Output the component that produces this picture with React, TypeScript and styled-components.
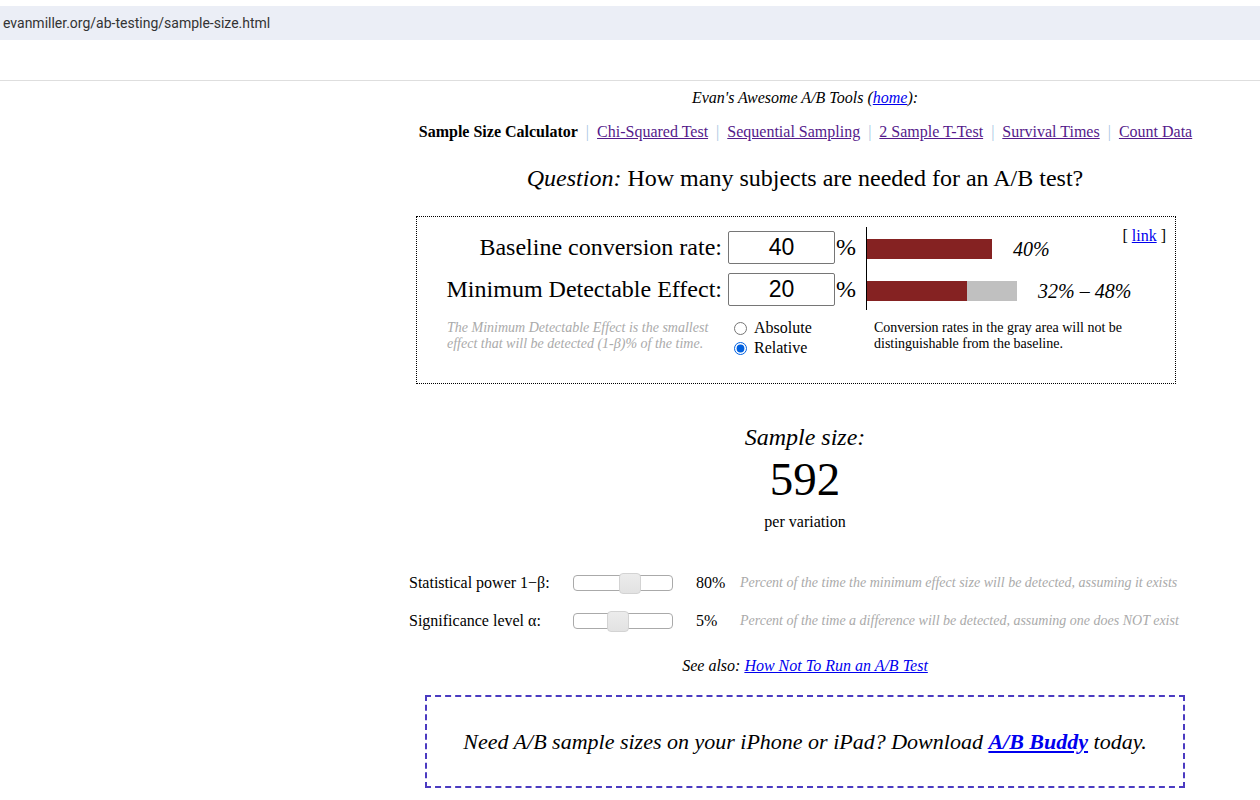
import React from "react";
import styled, { createGlobalStyle } from "styled-components";

const GlobalStyle = createGlobalStyle`
  html, body { margin: 0; padding: 0; background: #fff; }
  body { font-family: "Liberation Serif", "Times New Roman", serif; color: #000; }
  * { box-sizing: border-box; }
`;

const Chrome = styled.header`
  height: 81px;
  border-bottom: 1px solid #dedede;
  padding-top: 6px;
`;

const AddressBar = styled.div`
  height: 34px;
  background: #ebeef6;
  padding-left: 3px;
  font-family: Roboto, "Liberation Sans", sans-serif;
  font-size: 14px;
  line-height: 34px;
  color: #333;
`;

const Main = styled.main`
  margin-left: 415px;
  width: 780px;
  text-align: center;
`;

const Tagline = styled.div`
  margin-top: 8px;
  font-size: 16px;
  line-height: 18px;
  font-style: italic;
`;

const Link = styled.a<{ $visited?: boolean; $bold?: boolean }>`
  color: ${(p) => (p.$visited ? "#551a8b" : "#0000ee")};
  text-decoration: underline;
  font-weight: ${(p) => (p.$bold ? "bold" : "inherit")};
`;

const Nav = styled.nav`
  margin-top: 16px;
  padding-left: 1px;
  font-size: 16px;
  line-height: 18px;
`;

const Current = styled.b``;

const Sep = styled.span`
  color: #a9c6e2;
  padding: 0 8px;
`;

const Question = styled.h1`
  margin: 23px 0 0;
  font-size: 24px;
  line-height: 28px;
  font-weight: normal;
`;

const Em = styled.em``;

const Panel = styled.section`
  position: relative;
  margin: 24px 0 0 1px;
  width: 760px;
  height: 168px;
  border: 1px dotted #000;
  padding-top: 14px;
  display: grid;
  grid-template-columns: 311px 138px 1fr;
  grid-template-rows: 33px 33px auto;
  row-gap: 9px;
  text-align: left;
`;

const PermaLink = styled.div`
  position: absolute;
  top: 10px;
  right: 9px;
  font-size: 16px;
  line-height: 18px;
`;

const FieldLabel = styled.label`
  font-size: 24px;
  line-height: 33px;
  text-align: right;
  padding-right: 6px;
  white-space: nowrap;
`;

const FieldCell = styled.div`
  display: flex;
  align-items: center;
  font-size: 24px;
  line-height: 33px;
`;

const NumberInput = styled.input`
  width: 107px;
  height: 33px;
  border: 1px solid #767676;
  border-radius: 2px;
  padding: 0;
  margin: 0 1px 0 0;
  text-align: center;
  font-family: "Liberation Sans", Arial, sans-serif;
  font-size: 23px;
  color: #000;
  background: #fff;
`;

const Chart = styled.div`
  grid-column: 3;
  grid-row: 1 / 3;
  margin: -4px 0;
  border-left: 1px solid #000;
  padding-top: 12px;
  display: flex;
  flex-direction: column;
  gap: 22px;
`;

const BarRow = styled.div`
  display: flex;
  align-items: center;
  height: 20px;
`;

const BarSeg = styled.div<{ $gray?: boolean }>`
  height: 20px;
  background: ${(p) => (p.$gray ? "#c0c0c0" : "#852222")};
`;

const BarText = styled.span`
  margin-left: 21px;
  font-size: 20px;
  line-height: 20px;
  font-style: italic;
`;

const Helper = styled.div`
  grid-column: 1;
  margin-top: 5px;
  padding-left: 30px;
  width: 300px;
  font-size: 14px;
  line-height: 16px;
  font-style: italic;
  color: #aaa;
`;

const Radios = styled.div`
  grid-column: 2;
  margin-top: 3px;
  font-size: 16px;
  line-height: 20px;
`;

const RadioLine = styled.label`
  display: flex;
  align-items: center;
  input {
    margin: 0 7px 0 6px;
    width: 13px;
    height: 13px;
    accent-color: #0060df;
  }
`;

const Note = styled.div`
  grid-column: 3;
  margin-top: 5px;
  padding-left: 8px;
  width: 270px;
  font-size: 14px;
  line-height: 16px;
`;

const ResultTitle = styled.div`
  margin-top: 39px;
  font-size: 24px;
  line-height: 28px;
  font-style: italic;
`;

const ResultValue = styled.div`
  margin-top: 1px;
  font-size: 47px;
  line-height: 54px;
`;

const ResultUnit = styled.div`
  margin-top: 7px;
  font-size: 16px;
  line-height: 18px;
`;

const Sliders = styled.div`
  margin: 37px 0 0 -6px;
  display: grid;
  grid-template-columns: 164px 100px 23px 44px auto;
  grid-auto-rows: 30px;
  row-gap: 8px;
  align-items: center;
  text-align: left;
  font-size: 16px;
  width: 800px;
`;

const SliderLabel = styled.span`
  white-space: nowrap;
`;

const Track = styled.div`
  position: relative;
  width: 100px;
  height: 16px;
  border: 1px solid #aaa;
  border-radius: 4px;
  background: #fff;
`;

const Thumb = styled.span`
  position: absolute;
  top: -3px;
  width: 22px;
  height: 21px;
  border: 1px solid #d3d3d3;
  border-radius: 4px;
  background: linear-gradient(#ececec, #e2e2e2);
`;

const Spacer = styled.span``;

const SliderValue = styled.span``;

const SliderDesc = styled.span`
  font-size: 14px;
  font-style: italic;
  color: #aaa;
  white-space: nowrap;
`;

const SeeAlso = styled.div`
  margin-top: 21px;
  font-size: 16px;
  line-height: 18px;
  font-style: italic;
`;

const Promo = styled.div`
  margin: 20px auto 0;
  width: 760px;
  height: 93px;
  border: 2px dashed #4b3bc1;
  display: flex;
  align-items: center;
  justify-content: center;
  font-size: 22px;
  font-style: italic;
`;

const sliders = [
  {
    label: "Statistical power 1−β:",
    thumb: 45,
    value: "80%",
    desc: "Percent of the time the minimum effect size will be detected, assuming it exists",
  },
  {
    label: "Significance level α:",
    thumb: 33,
    value: "5%",
    desc: "Percent of the time a difference will be detected, assuming one does NOT exist",
  },
];

const navItems = [
  "Chi-Squared Test",
  "Sequential Sampling",
  "2 Sample T-Test",
  "Survival Times",
  "Count Data",
];

const SCALE = 3.125;

export default function App() {
  return (
    <>
      <GlobalStyle />
      <Chrome>
        <AddressBar>evanmiller.org/ab-testing/sample-size.html</AddressBar>
      </Chrome>
      <Main>
        <Tagline>
          Evan's Awesome A/B Tools (<Link href="#">home</Link>):
        </Tagline>
        <Nav>
          <Current>Sample Size Calculator</Current>
          {navItems.map((n) => (
            <React.Fragment key={n}>
              <Sep>|</Sep>
              <Link href="#" $visited>
                {n}
              </Link>
            </React.Fragment>
          ))}
        </Nav>
        <Question>
          <Em>Question:</Em> How many subjects are needed for an A/B test?
        </Question>

        <Panel>
          <PermaLink>
            [ <Link href="#">link</Link> ]
          </PermaLink>
          <FieldLabel>Baseline conversion rate:</FieldLabel>
          <FieldCell>
            <NumberInput defaultValue="40" />%
          </FieldCell>
          <Chart>
            <BarRow>
              <BarSeg style={{ width: 40 * SCALE }} />
              <BarText>40%</BarText>
            </BarRow>
            <BarRow>
              <BarSeg style={{ width: 32 * SCALE }} />
              <BarSeg $gray style={{ width: 16 * SCALE }} />
              <BarText>32% – 48%</BarText>
            </BarRow>
          </Chart>
          <FieldLabel>Minimum Detectable Effect:</FieldLabel>
          <FieldCell>
            <NumberInput defaultValue="20" />%
          </FieldCell>
          <Helper>
            The Minimum Detectable Effect is the smallest effect that will be
            detected (1-β)% of the time.
          </Helper>
          <Radios>
            <RadioLine>
              <input type="radio" name="mde" />
              Absolute
            </RadioLine>
            <RadioLine>
              <input type="radio" name="mde" defaultChecked />
              Relative
            </RadioLine>
          </Radios>
          <Note>
            Conversion rates in the gray area will not be distinguishable from
            the baseline.
          </Note>
        </Panel>

        <ResultTitle>Sample size:</ResultTitle>
        <ResultValue>592</ResultValue>
        <ResultUnit>per variation</ResultUnit>

        <Sliders>
          {sliders.map((s) => (
            <React.Fragment key={s.label}>
              <SliderLabel>{s.label}</SliderLabel>
              <Track>
                <Thumb style={{ left: s.thumb }} />
              </Track>
              <Spacer />
              <SliderValue>{s.value}</SliderValue>
              <SliderDesc>{s.desc}</SliderDesc>
            </React.Fragment>
          ))}
        </Sliders>

        <SeeAlso>
          See also: <Link href="#">How Not To Run an A/B Test</Link>
        </SeeAlso>

        <Promo>
          <span>
            Need A/B sample sizes on your iPhone or iPad? Download{" "}
            <Link href="#" $bold>
              A/B Buddy
            </Link>{" "}
            today.
          </span>
        </Promo>
      </Main>
    </>
  );
}
